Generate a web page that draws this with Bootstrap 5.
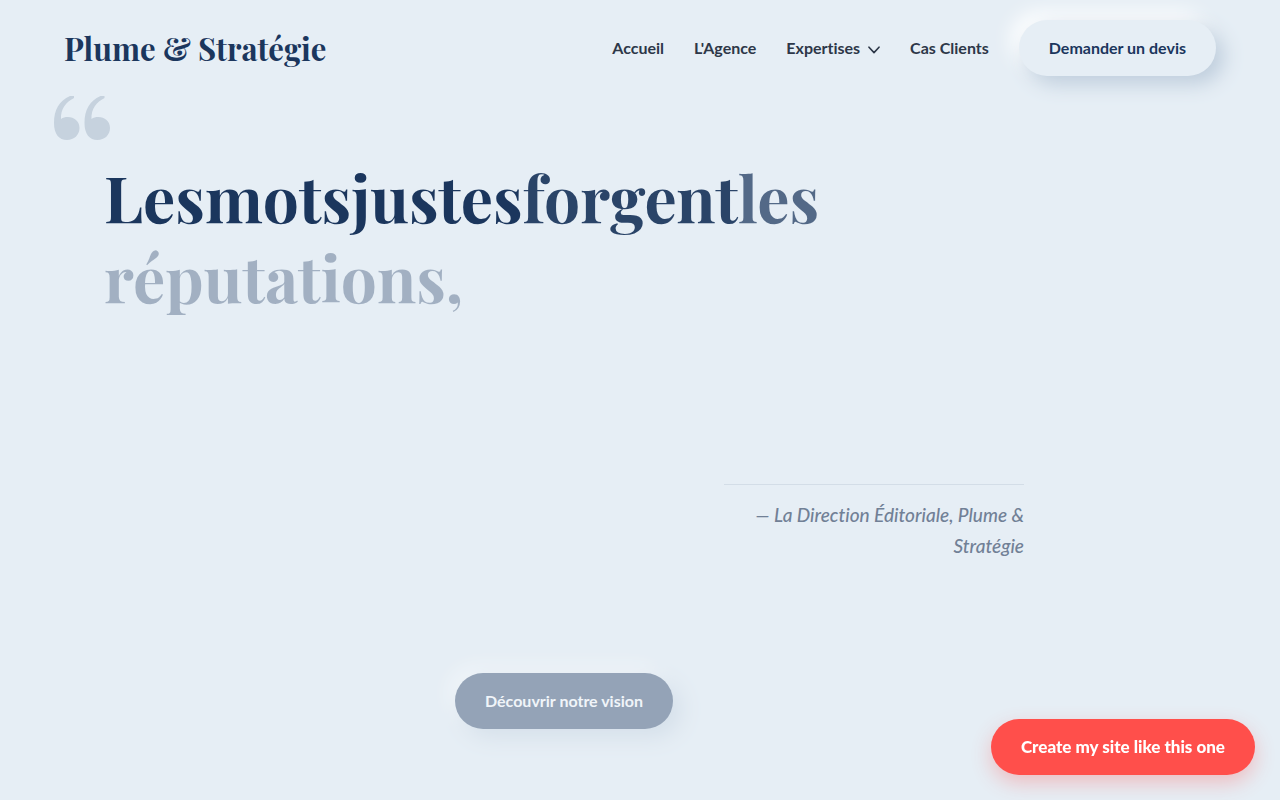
<!DOCTYPE html>
<html lang="fr">
<head>
<meta charset="utf-8">
<meta name="viewport" content="width=device-width, initial-scale=1">
<title>Plume &amp; Stratégie</title>
<link href="https://cdn.jsdelivr.net/npm/bootstrap@5.3.0/dist/css/bootstrap.min.css" rel="stylesheet">
<style>
:root { --navy: #1b365d; --ink: #2d3748; --paper: #e6eef5; }
body { background: var(--paper); color: var(--ink); font-family: Lato, sans-serif; font-size: 16px; line-height: 24px; font-variant-ligatures: none; }
.site-nav { padding: 20px 64px; }
.site-nav .navbar-brand { font-family: "Playfair Display", "Liberation Serif", serif; font-weight: 700; font-size: 31px; line-height: 40px; color: var(--navy); padding: 0; }
.site-nav .navbar-nav { gap: 30px; }
.site-nav .navbar-nav .nav-link { color: var(--ink); font-weight: 700; padding: 0; }
.pill { border: 0; border-radius: 50px; padding: 16px 30px; font-weight: 700; line-height: 24px; }
.pill-soft, .pill-soft:hover { background: var(--paper); color: var(--navy); box-shadow: 8px 8px 20px #becddc, -8px -8px 20px #fff; }
.pill-navy, .pill-navy:hover { background: var(--navy); color: #fff; box-shadow: 8px 8px 20px #becddc, -8px -8px 20px #fff; opacity: .4; }
.pill-red, .pill-red:hover { background: #ff4f4b; color: #fff; font-weight: 900; font-size: 17px; box-shadow: 0 8px 20px rgba(255, 79, 75, .3); }
.hero-quote { max-width: 1064px; padding: 0 40px 40px 104px; }
.quote-mark { left: 53px; top: 0; color: #c6d2de; }
.headline { font-family: "Playfair Display", "Liberation Serif", serif; font-weight: 700; font-size: 64px; line-height: 80px; color: var(--navy); padding-top: 61px; min-height: 388px; }
.word-4 { opacity: .92; }
.word-5 { opacity: .72; }
.word-6 { opacity: .33; }
.author { max-width: 300px; border-top: 1px solid #d3dde7; padding-top: 14px; font-size: 19px; line-height: 31px; font-style: italic; font-weight: 500; color: #718096; }
.hero-action { margin-top: 112px; }
.floating-cta { right: 25px; bottom: 25px; }
</style>
</head>
<body>
<header>
  <nav class="navbar navbar-expand site-nav">
    <a class="navbar-brand m-0" href="#">Plume &amp; Stratégie</a>
    <ul class="navbar-nav ms-auto align-items-center">
      <li class="nav-item"><a class="nav-link" href="#">Accueil</a></li>
      <li class="nav-item"><a class="nav-link" href="#">L'Agence</a></li>
      <li class="nav-item"><a class="nav-link d-flex align-items-center gap-2" href="#">Expertises
        <svg width="12" height="8" viewBox="0 0 12 8" fill="none" stroke="currentColor" stroke-width="1.6" stroke-linecap="round" stroke-linejoin="round" class="mt-1" aria-hidden="true"><path d="M1 1.2 6 6.6 11 1.2"/></svg></a></li>
      <li class="nav-item"><a class="nav-link" href="#">Cas Clients</a></li>
      <li class="nav-item"><button type="button" class="btn pill pill-soft">Demander un devis</button></li>
    </ul>
  </nav>
</header>
<main>
  <section class="hero-quote position-relative">
    <svg class="quote-mark position-absolute" width="58" height="45" viewBox="0 0 58 45" fill="currentColor" aria-hidden="true">
      <path d="M17 0C6 5 1 14 1 27c0 11 5 17 13 17 7 0 12.500-5 12.500-12S21 21 15 21c-3 0-5 .5-7 2C7.500 13 13 6 21 2V0Z"/>
      <path transform="translate(30.500)" d="M17 0C6 5 1 14 1 27c0 11 5 17 13 17 7 0 12.500-5 12.500-12S21 21 15 21c-3 0-5 .5-7 2C7.500 13 13 6 21 2V0Z"/>
    </svg>
    <h1 class="headline m-0"><span>Les</span><span>mots</span><span>justes</span><span class="word-4">forgent</span><span class="word-5">les</span><wbr><span class="word-6 d-inline-block">réputations,</span></h1>
    <p class="author ms-auto mb-0 text-end">— La Direction Éditoriale, Plume &amp; Stratégie</p>
    <div class="hero-action text-center"><button type="button" class="btn pill pill-navy">Découvrir notre vision</button></div>
  </section>
</main>
<button type="button" class="btn pill pill-red floating-cta position-fixed">Create my site like this one</button>
<script src="https://cdn.jsdelivr.net/npm/bootstrap@5.3.0/dist/js/bootstrap.bundle.min.js"></script>
</body>
</html>
